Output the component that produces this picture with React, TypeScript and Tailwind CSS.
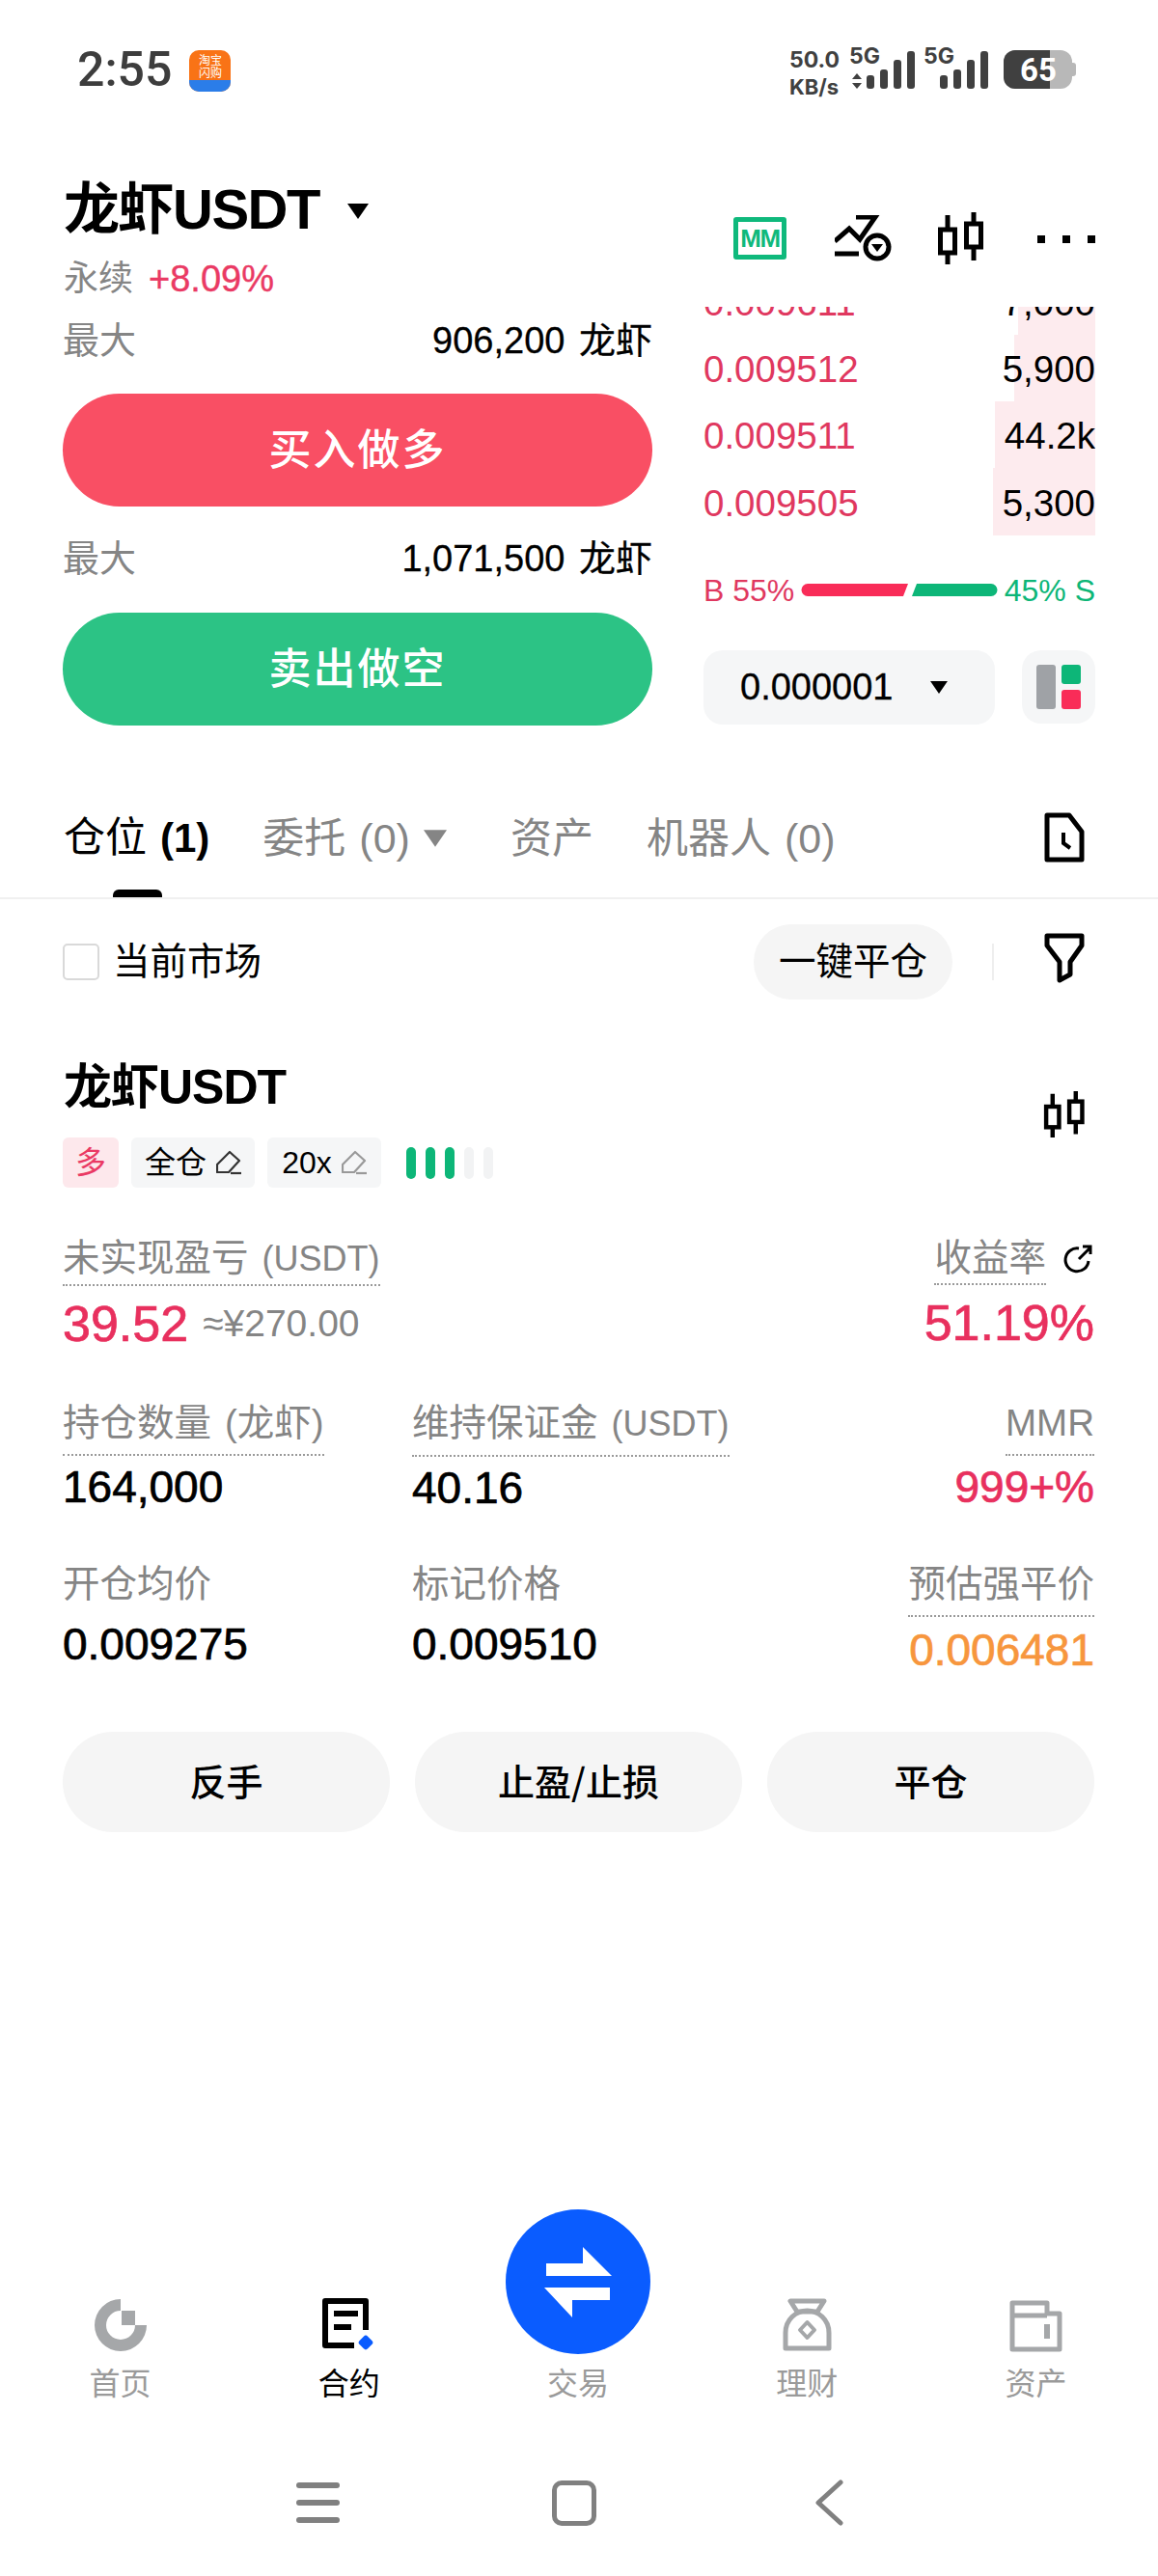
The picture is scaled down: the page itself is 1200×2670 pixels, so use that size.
import React from "react";

const Tri = ({ className = "" }: { className?: string }) => (
  <svg viewBox="0 0 22 16" className={className} fill="currentColor"><path d="M0 0H22L11 16Z" /></svg>
);

const Candle = ({ className = "" }: { className?: string }) => (
  <svg viewBox="0 0 54 54" className={className} fill="none" stroke="currentColor" strokeWidth="5">
    <path d="M11 3V54M38 0V50" />
    <rect x="3.5" y="18" width="15" height="24" fill="#fff" />
    <rect x="30.5" y="12" width="15" height="24" fill="#fff" />
  </svg>
);

const Pen = ({ color }: { color: string }) => (
  <svg viewBox="0 0 26 26" className="w-[26px] h-[26px]" fill="none" stroke={color} strokeWidth="2.2">
    <path d="M1 15L14 2L24 11L13 23H1Z" strokeLinejoin="round" />
    <path d="M15 24H26" />
  </svg>
);

const Label = ({ children, dotted, pb = "pb-[2px]" }: { children: React.ReactNode; dotted?: boolean; pb?: string }) => (
  <div className={`text-[38.5px] leading-[48px] text-[#858585] w-fit ${pb} ${dotted ? "border-b-2 border-dotted border-[#9a9a9a]" : ""}`}>
    {children}
  </div>
);

const Num = ({ children, className = "" }: { children: React.ReactNode; className?: string }) => (
  <div className={`[-webkit-text-stroke:0.7px] ${className}`}>{children}</div>
);

const rows = [
  { p: "0.009611", q: "7,000", d: "w-[80px]", h: "h-[69px]" },
  { p: "0.009512", q: "5,900", d: "w-[84px]", h: "h-[69px]" },
  { p: "0.009511", q: "44.2k", d: "w-[104px]", h: "h-[69px]" },
  { p: "0.009505", q: "5,300", d: "w-[106px]", h: "h-[70px]" },
];

const NavItem = ({ icon, label, active }: { icon: React.ReactNode; label: string; active?: boolean }) => (
  <div className="flex flex-col items-center justify-end">
    {icon}
    <div className={`text-[32px] leading-[40px] mt-[13px] ${active ? "text-black" : "text-[#9a9a9a]"}`}>{label}</div>
  </div>
);

export default function App() {
  return (
    <div className="w-[1200px] h-[2670px] bg-white overflow-hidden text-black font-['Liberation_Sans','Noto_Sans_CJK_SC',sans-serif]">
      {/* status bar */}
      <div className="h-[130px] pl-[80px] pr-[85px] flex justify-between pt-[48px]">
        <div className="flex items-start gap-[18px]">
          <div className="font-['Roboto',sans-serif] font-medium text-[50px] leading-[48px] text-[#3d3d3d]">2:55</div>
          <div className="w-[43px] h-[43px] mt-[4px] rounded-[10px] overflow-hidden flex flex-col bg-[#f97316] text-white text-[12px] leading-[13px] text-center items-center">
            <div className="pt-[3px] w-[24px] font-['Noto_Sans_CJK_SC',sans-serif]">淘宝闪购</div>
            <div className="mt-auto w-full h-[12px] bg-[#2b7de9]"></div>
          </div>
        </div>
        <div className="flex items-start text-[#404040] font-['Inter',sans-serif] font-bold">
          <div className="text-[23px] leading-[28px] mr-[10px]">
            <div>50.0</div>
            <div className="text-[22px]">KB/s</div>
          </div>
          <div className="relative w-[68px] h-[46px]">
            <span className="absolute left-0 top-0 text-[23px] leading-[20px]">5G</span>
            <svg viewBox="0 0 68 46" className="w-[68px] h-[46px]" fill="#404040">
              <path d="M8 28L13 34H3ZM8 44L3 38H13Z" />
              <rect x="18" y="30" width="8" height="14" rx="3" />
              <rect x="32" y="24" width="8" height="20" rx="3" />
              <rect x="46" y="14" width="8" height="30" rx="3" />
              <rect x="60" y="5" width="8" height="39" rx="3" />
            </svg>
          </div>
          <div className="relative w-[67px] h-[46px] ml-[9px]">
            <span className="absolute left-0 top-0 text-[23px] leading-[20px]">5G</span>
            <svg viewBox="0 0 67 46" className="w-[67px] h-[46px]" fill="#404040">
              <rect x="17" y="30" width="8" height="14" rx="3" />
              <rect x="31" y="24" width="8" height="20" rx="3" />
              <rect x="45" y="14" width="8" height="30" rx="3" />
              <rect x="59" y="5" width="8" height="39" rx="3" />
            </svg>
          </div>
          <div className="relative w-[75px] h-[40px] ml-[16px] mt-[4px] flex items-center">
            <div className="w-[71px] h-[40px] rounded-[12px] overflow-hidden bg-[#b8b8b8]">
              <div className="w-[48px] h-[40px] bg-[#404040]"></div>
            </div>
            <div className="w-[4px] h-[14px] rounded-r-[3px] bg-[#b8b8b8]"></div>
            <span className="absolute left-[17px] top-0 text-white font-['Roboto',sans-serif] text-[33px] leading-[42px]">65</span>
          </div>
        </div>
      </div>

      {/* header */}
      <div className="h-[175px] pl-[66px] pr-[65px] flex justify-between">
        <div>
          <div className="flex items-center pt-[53px]">
            <div className="text-[58px] leading-[68px] font-bold tracking-[-1.5px]">龙虾USDT</div>
            <Tri className="w-[22px] h-[16px] ml-[29px] mt-[4px]" />
          </div>
          <div className="flex items-center mt-[14px] h-[48px] text-[36px]">
            <span className="text-[#858585]">永续</span>
            <span className="text-[#ea3a64] ml-[16px] text-[38px] [-webkit-text-stroke:0.4px]">+8.09%</span>
          </div>
        </div>
        <div className="flex items-start pt-[90px]">
          <div className="w-[55px] h-[44px] mt-[5px] bg-white border-[5px] border-[#0fb97c] rounded-[3px] flex items-center justify-center text-[#0fb97c] text-[26px] leading-[26px] font-bold tracking-[-1.5px]">MM</div>
          <svg viewBox="0 0 60 50" className="w-[60px] h-[50px] ml-[50px] mt-[3px]" fill="none" stroke="#000" strokeWidth="5">
            <path d="M0 27L15 14L26 25L42 2H22" />
            <path d="M0 40H25" />
            <circle cx="44" cy="33" r="12" />
            <path d="M38 30H50L44 38Z" fill="#000" stroke="none" />
          </svg>
          <Candle className="w-[54px] h-[54px] ml-[46px]" />
          <div className="flex gap-[18px] ml-[50px] mt-[24px]">
            <div className="w-[8px] h-[8px] bg-black"></div>
            <div className="w-[8px] h-[8px] bg-black"></div>
            <div className="w-[8px] h-[8px] bg-black"></div>
          </div>
        </div>
      </div>

      {/* trading */}
      <div className="h-[455px] pl-[65px] pr-[65px] flex justify-between">
        <div className="w-[611px]">
          <div className="mt-[20px] h-[56px] flex justify-between items-center text-[38px]">
            <span className="text-[#858585]">最大</span>
            <span className="[-webkit-text-stroke:0.3px]">906,200 <span className="ml-[4px]">龙虾</span></span>
          </div>
          <div className="mt-[27px] h-[117px] pb-[8px] rounded-full bg-[#f94f64] flex items-center justify-center text-white text-[44px] font-['Noto_Sans_CJK_SC',sans-serif] font-medium tracking-[2px]">买入做多</div>
          <div className="mt-[26px] h-[56px] flex justify-between items-center text-[38px]">
            <span className="text-[#858585]">最大</span>
            <span className="[-webkit-text-stroke:0.3px]">1,071,500 <span className="ml-[4px]">龙虾</span></span>
          </div>
          <div className="mt-[28px] h-[117px] pb-[8px] rounded-full bg-[#2cc385] flex items-center justify-center text-white text-[44px] font-['Noto_Sans_CJK_SC',sans-serif] font-medium tracking-[2px]">卖出做空</div>
        </div>
        <div className="w-[406px] mt-[13px]">
          <div className="h-[237px] overflow-hidden">
            <div className="-mt-[40px]">
              {rows.map((r) => (
                <div key={r.p} className={`relative flex justify-between items-center text-[38.5px] pt-[3px] ${r.h}`}>
                  <div className={`absolute right-0 top-0 bottom-0 bg-[#fdebee] ${r.d}`}></div>
                  <span className="relative text-[#e0385f]">{r.p}</span>
                  <span className="relative">{r.q}</span>
                </div>
              ))}
            </div>
          </div>
          <div className="mt-[37px] h-[40px] flex items-center justify-between text-[32px]">
            <span className="text-[#e0385f]">B 55%</span>
            <svg viewBox="0 0 204 14" className="w-[204px] h-[14px]">
              <path d="M7 0H111L106 13H7A6.5 6.5 0 0 1 7 0Z" fill="#f92c58" />
              <path d="M120 0H197A6.5 6.5 0 0 1 197 13H115Z" fill="#0db678" />
            </svg>
            <span className="text-[#0db678]">45% S</span>
          </div>
          <div className="mt-[42px] flex justify-between">
            <div className="w-[302px] h-[77px] rounded-[20px] bg-[#f5f6f7] flex items-center pl-[38px] text-[38px] [-webkit-text-stroke:0.3px]">
              0.000001
              <Tri className="w-[18px] h-[13px] ml-[38px]" />
            </div>
            <div className="w-[76px] h-[76px] rounded-[20px] bg-[#f5f6f7] grid grid-cols-2 gap-x-[6px] gap-y-[6px] p-[15px]">
              <div className="row-span-2 rounded-[3px] bg-[#9fa2a6]"></div>
              <div className="rounded-[3px] bg-[#0db678]"></div>
              <div className="rounded-[3px] bg-[#f92c58]"></div>
            </div>
          </div>
        </div>
      </div>

      {/* tabs */}
      <div className="h-[172px] border-b-2 border-[#f0f0f0] pl-[66px] pr-[76px] relative flex justify-between items-start pt-[84px]">
        <div className="flex items-center text-[43px] leading-[48px] text-[#858585]">
          <span className="text-black">仓位<span className="text-[42px] font-bold ml-[14px]">(1)</span></span>
          <span className="ml-[55px]">委托<span className="text-[43px] ml-[14px]">(0)</span></span>
          <Tri className="w-[24px] h-[18px] ml-[14px]" />
          <span className="ml-[66px]">资产</span>
          <span className="ml-[55px]">机器人<span className="text-[43px] ml-[14px]">(0)</span></span>
        </div>
        <svg viewBox="0 0 42 52" className="w-[42px] h-[52px] -mt-[2px]" fill="none" stroke="#000" strokeWidth="5">
          <path d="M3 3H26L39 20V49H3Z" strokeLinejoin="round" />
          <path d="M20 21V32L27 37" strokeWidth="4" />
        </svg>
        <div className="absolute left-[117px] bottom-0 w-[51px] h-[8px] bg-black rounded-t-[6px]"></div>
      </div>

      {/* filter */}
      <div className="h-[120px] pl-[65px] pr-[76px] flex items-center pt-[10px]">
        <div className="w-[38px] h-[38px] rounded-[5px] border-2 border-[#d9d9d9]"></div>
        <div className="ml-[14px] text-[38.5px]">当前市场</div>
        <div className="ml-auto w-[206px] h-[78px] rounded-full bg-[#f5f5f5] flex items-center justify-center text-[38.5px]">一键平仓</div>
        <div className="ml-[41px] w-[2px] h-[38px] bg-[#eeeeee]"></div>
        <svg viewBox="0 0 42 52" className="w-[42px] h-[52px] ml-[52px] -mt-[8px]" fill="none" stroke="#000" strokeWidth="5" strokeLinejoin="round">
          <path d="M3 3H39V13L27 30V43L16 49V30L3 13Z" />
        </svg>
      </div>

      {/* position */}
      <div className="pl-[65px] pr-[66px]">
        <div className="flex justify-between">
          <div>
            <div className="text-[50px] leading-[60px] font-bold pl-[1px] mt-[45px] tracking-[-1px]">龙虾USDT</div>
            <div className="flex items-center mt-[22px] h-[52px] text-[32px] gap-[13px]">
              <div className="w-[58px] h-[52px] rounded-[6px] bg-[#fde8ec] text-[#ea3a64] flex items-center justify-center">多</div>
              <div className="w-[128px] h-[52px] rounded-[6px] bg-[#f5f6f7] flex items-center justify-center gap-[10px]">全仓<Pen color="#333" /></div>
              <div className="w-[118px] h-[52px] rounded-[6px] bg-[#f5f6f7] flex items-center justify-center gap-[10px]">20x<Pen color="#999" /></div>
              <div className="flex gap-[10px] ml-[13px]">
                <div className="w-[10px] h-[33px] rounded-full bg-[#0db678]"></div>
                <div className="w-[10px] h-[33px] rounded-full bg-[#0db678]"></div>
                <div className="w-[10px] h-[33px] rounded-full bg-[#0db678]"></div>
                <div className="w-[10px] h-[33px] rounded-full bg-[#f2f3f4]"></div>
                <div className="w-[10px] h-[33px] rounded-full bg-[#f2f3f4]"></div>
              </div>
            </div>
          </div>
          <Candle className="w-[48px] h-[54px] mt-[76px] mr-[5px]" />
        </div>

        <div className="flex justify-between mt-[49px]">
          <div>
            <Label dotted>未实现盈亏<span className="text-[36px] ml-[14px]">(USDT)</span></Label>
            <div className="flex items-center mt-[7px] h-[64px]">
              <Num className="text-[52px] text-[#e8305e]">39.52</Num>
              <span className="text-[39px] text-[#858585] ml-[15px]">≈¥270.00</span>
            </div>
          </div>
          <div className="flex flex-col items-end">
            <div className="flex items-start gap-[16px]">
              <Label dotted>收益率</Label>
              <svg viewBox="0 0 34 34" className="w-[34px] h-[34px] mt-[8px]" fill="none" stroke="#000" strokeWidth="3">
                <path d="M28 19A12 12 0 1 1 18 6" />
                <path d="M18 17L30 5M22 4H30V12" />
              </svg>
            </div>
            <Num className="text-[52px] text-[#e8305e] leading-[64px] mt-[7px]">51.19%</Num>
          </div>
        </div>

        <div className="grid grid-cols-[362px_1fr_auto] mt-[47px]">
          <div>
            <Label dotted pb="pb-[8px]">持仓数量<span className="ml-[14px]">(龙虾)</span></Label>
            <Num className="text-[46px] leading-[56px] mt-[4px]">164,000</Num>
          </div>
          <div>
            <Label dotted pb="pb-[8px]">维持保证金<span className="text-[36px] ml-[14px]">(USDT)</span></Label>
            <Num className="text-[46px] leading-[56px] mt-[4px]">40.16</Num>
          </div>
          <div className="flex flex-col items-end">
            <Label dotted pb="pb-[8px]">MMR</Label>
            <Num className="text-[46px] leading-[56px] mt-[4px] text-[#e8305e]">999+%</Num>
          </div>
        </div>

        <div className="grid grid-cols-[362px_1fr_auto] mt-[48px]">
          <div>
            <Label>开仓均价</Label>
            <Num className="text-[46px] leading-[56px] mt-[8px]">0.009275</Num>
          </div>
          <div>
            <Label>标记价格</Label>
            <Num className="text-[46px] leading-[56px] mt-[8px]">0.009510</Num>
          </div>
          <div className="flex flex-col items-end">
            <Label dotted pb="pb-[8px]">预估强平价</Label>
            <Num className="text-[46px] leading-[56px] mt-[6px] text-[#f7963d]">0.006481</Num>
          </div>
        </div>

        <div className="grid grid-cols-3 gap-[26px] mt-[57px]">
          <div className="h-[104px] pb-[6px] rounded-full bg-[#f5f5f5] flex items-center justify-center text-[38px] font-['Noto_Sans_CJK_SC',sans-serif] font-medium">反手</div>
          <div className="h-[104px] pb-[6px] rounded-full bg-[#f5f5f5] flex items-center justify-center text-[38px] font-['Noto_Sans_CJK_SC',sans-serif] font-medium">止盈/止损</div>
          <div className="h-[104px] pb-[6px] rounded-full bg-[#f5f5f5] flex items-center justify-center text-[38px] font-['Noto_Sans_CJK_SC',sans-serif] font-medium">平仓</div>
        </div>
      </div>

      {/* bottom nav */}
      <div className="mt-[391px] h-[200px] grid grid-cols-5 items-end px-[6px] w-[1198px]">
        <NavItem
          label="首页"
          icon={
            <svg viewBox="0 0 56 56" className="w-[56px] h-[56px]" fill="#a5a7a9">
              <path d="M28 1A27 27 0 1 0 55 28H43A15 15 0 1 1 28 13Z" />
              <path d="M29 13H43V28H29Z" />
            </svg>
          }
        />
        <NavItem
          active
          label="合约"
          icon={
            <svg viewBox="0 0 56 56" className="w-[56px] h-[56px]" fill="none">
              <path d="M45 33V3H3V49H33" stroke="#000" strokeWidth="6" strokeLinejoin="round" />
              <path d="M12 13H37V19H12ZM12 27H30V33H12Z" fill="#000" />
              <rect x="39" y="40" width="12" height="12" rx="3" transform="rotate(45 45 46)" fill="#0a5cff" />
            </svg>
          }
        />
        <div className="flex flex-col items-center">
          <div className="w-[150px] h-[150px] rounded-full bg-[#0a5cff] flex items-center justify-center">
            <svg viewBox="0 0 70 73" className="w-[70px] h-[73px]" fill="#fff">
              <path d="M2 17H40V0L70 30H2Z" />
              <path d="M68 42H0L29 73V55H68Z" />
            </svg>
          </div>
          <div className="text-[32px] leading-[40px] mt-[11px] text-[#9a9a9a]">交易</div>
        </div>
        <NavItem
          label="理财"
          icon={
            <svg viewBox="0 0 51 56" className="w-[51px] h-[56px]" fill="none" stroke="#a5a7a9" strokeWidth="5" strokeLinejoin="round">
              <path d="M8 3H43L36 14H15Z" />
              <path d="M3 52V36C3 22 14 13 25.5 13C37 13 48 22 48 36V52Z" />
              <path d="M25.5 25L33 33L25.5 41L18 33Z" strokeWidth="4" />
            </svg>
          }
        />
        <NavItem
          label="资产"
          icon={
            <svg viewBox="0 0 55 56" className="w-[55px] h-[56px]" fill="none" stroke="#a5a7a9" strokeWidth="5" strokeLinejoin="round">
              <path d="M3 53V5H39V16H52V53Z" />
              <path d="M3 18H39" />
              <path d="M36 27H42V42H36Z" fill="#a5a7a9" stroke="none" />
            </svg>
          }
        />
      </div>

      {/* system nav */}
      <div className="flex items-center justify-center pt-[80px] pr-[20px]">
        <div className="flex flex-col gap-[12px] mr-[220px]">
          <div className="w-[45px] h-[6px] rounded-full bg-[#808080]"></div>
          <div className="w-[45px] h-[6px] rounded-full bg-[#808080]"></div>
          <div className="w-[45px] h-[6px] rounded-full bg-[#808080]"></div>
        </div>
        <div className="w-[46px] h-[47px] rounded-[10px] border-[5px] border-[#808080]"></div>
        <svg viewBox="0 0 30 48" className="w-[30px] h-[48px] ml-[226px]" fill="none" stroke="#808080" strokeWidth="5" strokeLinecap="round" strokeLinejoin="round">
          <path d="M27 3L4 24L27 45" />
        </svg>
      </div>
    </div>
  );
}
